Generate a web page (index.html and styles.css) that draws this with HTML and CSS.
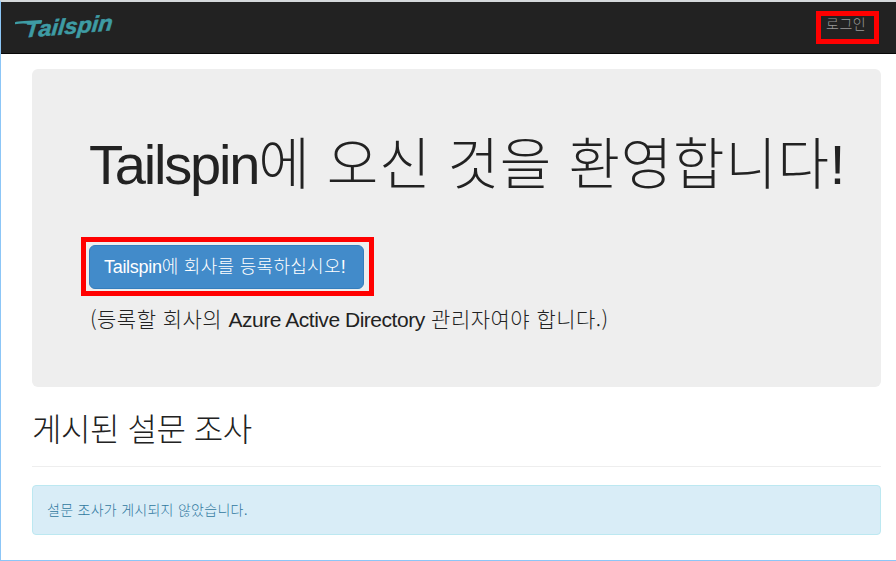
FILE: index.html
```html
<!DOCTYPE html>
<html lang="ko">
<head>
<meta charset="utf-8">
<title>Tailspin</title>
<link rel="stylesheet" href="styles.css">
</head>
<body>
<div class="page">
  <header class="navbar">
    <svg class="logo" width="108" height="32" viewBox="0 0 108 32" role="img" aria-label="Tailspin">
      <path class="swash" d="M0 11.3 Q2 10 9 9.9 L27 9 L25.5 12.2 L15 13 Q7 11.7 0 13.3Z"/>
      <text class="logo-text" transform="translate(9.5 26.6) rotate(-4.7) skewX(-10)" textLength="88" lengthAdjust="spacingAndGlyphs">Tailspin</text>
    </svg>
    <a class="login">로그인</a>
  </header>
  <main class="content">
    <section class="jumbotron">
      <h1><span class="latin">Tailspin</span>에 오신 것을 환영합니다!</h1>
      <div class="callout"><a class="button"><span class="button-latin">Tailspin</span>에 회사를 등록하십시오!</a></div>
      <p class="note">(등록할 회사의 <span class="note-latin">Azure Active Directory</span> 관리자여야 합니다.)</p>
    </section>
    <h2>게시된 설문 조사</h2>
    <div class="alert">설문 조사가 게시되지 않았습니다.</div>
  </main>
</div>
</body>
</html>
```

FILE: styles.css
```css
* { box-sizing: border-box; }
body {
  margin: 0;
  background: #fff;
  color: #222;
  font-family: "Liberation Sans", "Noto Sans CJK KR", sans-serif;
  font-weight: 300;
}
.page {
  height: 561px;
  border-top: 2px solid #d5d9db;
  border-left: 1px solid #8cc6f7;
  border-bottom: 1px solid #8cc6f7;
  overflow: hidden;
}
.navbar {
  display: flex;
  justify-content: space-between;
  align-items: flex-start;
  height: 52px;
  padding: 9px 17px 0 14px;
  background: #222;
  border-bottom: 1px solid #080808;
}
.logo { overflow: visible; }
.swash { fill: #3e9ca4; }
.logo-text {
  fill: #3e9ca4;
  stroke: #3e9ca4;
  stroke-width: 0.5;
  font-family: "Liberation Sans", sans-serif;
  font-size: 22px;
  font-weight: bold;
  font-style: italic;
}
.login {
  width: 63px;
  height: 33px;
  border: 5px solid #f00;
  color: #999;
  font-size: 14px;
  letter-spacing: 0.5px;
  line-height: 17px;
  padding-left: 5px;
  white-space: nowrap;
}
.content { padding: 15px 15px 0 31px; }
.jumbotron {
  height: 318px;
  padding: 53px 0 0 49px;
  background: #eee;
  border-radius: 6px;
}
h1, h2, p { margin: 0; font-weight: 300; white-space: nowrap; }
h1 {
  height: 85px;
  padding-left: 8px;
  font-size: 56px;
  line-height: 86px;
  letter-spacing: 0.75px;
}
.latin { letter-spacing: -2.2px; }
.callout {
  width: 293px;
  height: 59px;
  margin-top: 30px;
  padding: 3px;
  border: 5px solid #f00;
}
.button {
  display: block;
  width: 275px;
  height: 44px;
  padding-left: 14px;
  background: #428bca;
  border: 1px solid #357ebd;
  border-radius: 6px;
  color: #fff;
  font-size: 18px;
  letter-spacing: 0.3px;
  line-height: 43px;
  white-space: nowrap;
}
.button-latin { letter-spacing: -0.3px; }
.note {
  padding-left: 9px;
  margin-top: 7px;
  font-family: "Noto Sans CJK KR", sans-serif;
  font-size: 21px;
  letter-spacing: 0.47px;
  line-height: 30px;
}
.note-latin {
  font-family: "Liberation Sans", sans-serif;
  letter-spacing: -0.47px;
}
h2 {
  height: 80px;
  padding-top: 20px;
  border-bottom: 1px solid #eee;
  font-size: 32px;
  letter-spacing: -0.45px;
  line-height: 46px;
}
.alert {
  height: 50px;
  margin-top: 18px;
  padding-left: 14px;
  background: #d9edf7;
  border: 1px solid #bce8f1;
  border-radius: 4px;
  color: #31799f;
  font-size: 14px;
  letter-spacing: 0.28px;
  line-height: 48px;
}
```
